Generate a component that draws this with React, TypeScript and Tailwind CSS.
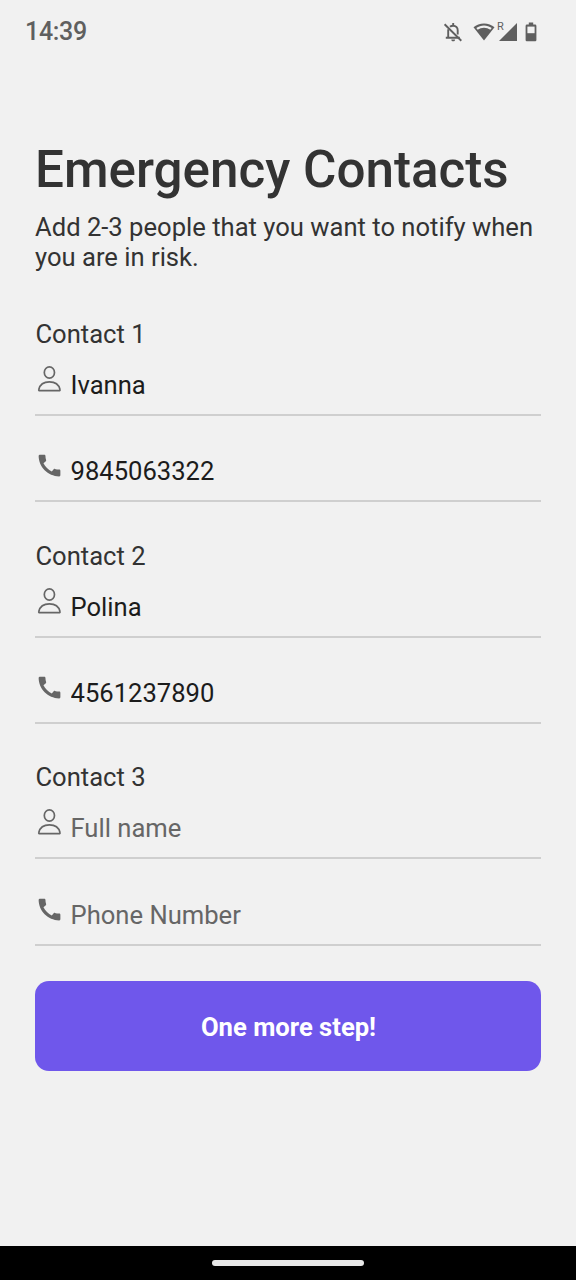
import { useState } from "react";

interface Contact {
  id: number;
  name: string;
  phone: string;
}

const initialContacts: Contact[] = [
  { id: 1, name: "Ivanna", phone: "9845063322" },
  { id: 2, name: "Polina", phone: "4561237890" },
  { id: 3, name: "", phone: "" },
];

function PersonIcon() {
  return (
    <svg viewBox="0 0 29 29" fill="none" stroke="#666666" strokeWidth="1.7" className="w-[29px] h-[29px] shrink-0">
      <ellipse cx="14.4" cy="7.5" rx="5.1" ry="5.7" />
      <path d="M4.8 25.7C4 25.7 3.6 25.2 3.8 24.5C4.9 19.8 9 16.9 14.4 16.9C19.8 16.9 23.9 19.8 25 24.5C25.2 25.2 24.8 25.7 24 25.7Z" />
    </svg>
  );
}

function PhoneIcon() {
  return (
    <svg viewBox="0 0 24 24" fill="#666666" className="w-[29px] h-[29px] shrink-0">
      <path d="M20.01 15.38c-1.23 0-2.42-.2-3.53-.56-.35-.12-.74-.03-1.01.24l-1.57 1.97c-2.83-1.35-5.48-3.9-6.89-6.83l1.95-1.66c.27-.28.35-.67.24-1.02-.37-1.11-.56-2.3-.56-3.53 0-.54-.45-.99-.99-.99H4.19C3.65 3 3 3.24 3 3.99 3 13.28 10.73 21 20.01 21c.71 0 .99-.63.99-1.18v-3.45c0-.54-.45-.99-.99-.99z" />
    </svg>
  );
}

function StatusBar() {
  return (
    <div className="flex items-center justify-between h-[63px] pl-[25px] pr-[39px] text-[#5f5f5f]">
      <span className="text-[25px] leading-[30px] font-medium tracking-[-0.3px]">14:39</span>
      <div className="flex items-center">
        <svg viewBox="0 0 20 22" fill="none" stroke="currentColor" strokeWidth="1.9" className="w-5 h-[22px]">
          <path d="M5.2 8.2V16M2.8 16.8H16.8M7 5.8C7.9 5 8.9 4.7 10.2 4.7C12.8 4.7 14.7 6.6 14.7 9.2V13.5" />
          <path d="M10.2 2V4.5M1.6 3.2L18.3 19.7" />
          <path d="M8.3 18.4H12.1C12.1 19.6 11.3 20.3 10.2 20.3S8.3 19.6 8.3 18.4Z" fill="currentColor" stroke="none" />
        </svg>
        <svg viewBox="0 0 22 20" className="w-[22px] h-5 ml-[10px]">
          <path d="M11 1.4C7 1.4 3.3 2.9 .5 5.3L11 18.6L21.5 5.3C18.7 2.9 15 1.4 11 1.4Z" fill="currentColor" />
          <path d="M3.3 5.9C5.6 4.3 8.2 3.4 11 3.4S16.4 4.3 18.7 5.9L17.3 7.7C15.5 6.4 13.3 5.7 11 5.7S6.5 6.4 4.7 7.7Z" fill="#f1f1f1" />
        </svg>
        <div className="flex items-start ml-[2px]">
          <span className="w-[6px] -mt-[1px] text-[11px] leading-[10px]">R</span>
          <svg viewBox="0 0 18 18" fill="currentColor" className="w-[18px] h-[18px] -ml-[4px] mr-[8px]">
            <path d="M18 0V18H0Z" />
          </svg>
        </div>
        <svg viewBox="0 0 12 20" className="w-3 h-5">
          <path d="M3.8 .6H8.2V2.6H10Q11.4 2.6 11.4 4V18Q11.4 19.2 10.2 19.2H1.8Q.6 19.2 .6 18V4Q.6 2.6 2 2.6H3.8Z" fill="currentColor" />
          <path d="M2.4 4.6H9.6V11.2H2.4Z" fill="#f1f1f1" />
        </svg>
      </div>
    </div>
  );
}

interface FieldProps {
  icon: React.ReactNode;
  type: string;
  placeholder: string;
  value: string;
  onChange: (value: string) => void;
}

function Field({ icon, type, placeholder, value, onChange }: FieldProps) {
  return (
    <div className="flex items-start h-[51px] border-b-2 border-[#cfcfcf]">
      {icon}
      <input
        type={type}
        placeholder={placeholder}
        value={value}
        onChange={(e) => onChange(e.target.value)}
        className="flex-1 min-w-0 h-[30px] mt-[5px] pl-[6.5px] bg-transparent text-[25.6px] leading-[30px] text-[#1c1c1c] placeholder:text-[#666666] focus:outline-none"
      />
    </div>
  );
}

export default function App() {
  const [contacts, setContacts] = useState(initialContacts);

  const update = (id: number, patch: Partial<Contact>) => {
    setContacts(contacts.map((c) => (c.id === id ? { ...c, ...patch } : c)));
  };

  return (
    <div className="flex flex-col w-[576px] h-[1280px] overflow-hidden bg-[#f1f1f1] font-[Roboto,sans-serif]">
      <StatusBar />

      <main className="flex-1 px-[35px] pt-[77px]">
        <h1 className="text-[51.2px] leading-[60px] font-medium text-[#333333] whitespace-nowrap">Emergency Contacts</h1>
        <p className="mt-3 text-[25.6px] leading-[30px] text-[#333333]">
          Add 2-3 people that you want to notify when you are in risk.
        </p>

        <form className="mt-[47px]" onSubmit={(e) => e.preventDefault()}>
          <div className="space-y-[38.2px]">
            {contacts.map((contact) => (
              <div key={contact.id}>
                <label className="block mb-[15.9px] pl-[0.4px] text-[25.6px] leading-[30px] text-[#333333]">Contact {contact.id}</label>
                <div className="space-y-[35.6px]">
                  <Field
                    icon={<PersonIcon />}
                    type="text"
                    placeholder="Full name"
                    value={contact.name}
                    onChange={(name) => update(contact.id, { name })}
                  />
                  <Field
                    icon={<PhoneIcon />}
                    type="tel"
                    placeholder="Phone Number"
                    value={contact.phone}
                    onChange={(phone) => update(contact.id, { phone })}
                  />
                </div>
              </div>
            ))}
          </div>

          <button
            type="submit"
            className="w-full h-[90px] mt-[35.1px] pt-[2px] pl-[1px] rounded-[14px] bg-[#6f57eb] text-white text-[25.6px] leading-[30px] font-bold"
          >
            One more step!
          </button>
        </form>
      </main>

      <div className="flex justify-center h-[34px] pt-[14px] bg-black">
        <div className="w-[152px] h-[6px] rounded-full bg-[#e8e8e8]" />
      </div>
    </div>
  );
}
